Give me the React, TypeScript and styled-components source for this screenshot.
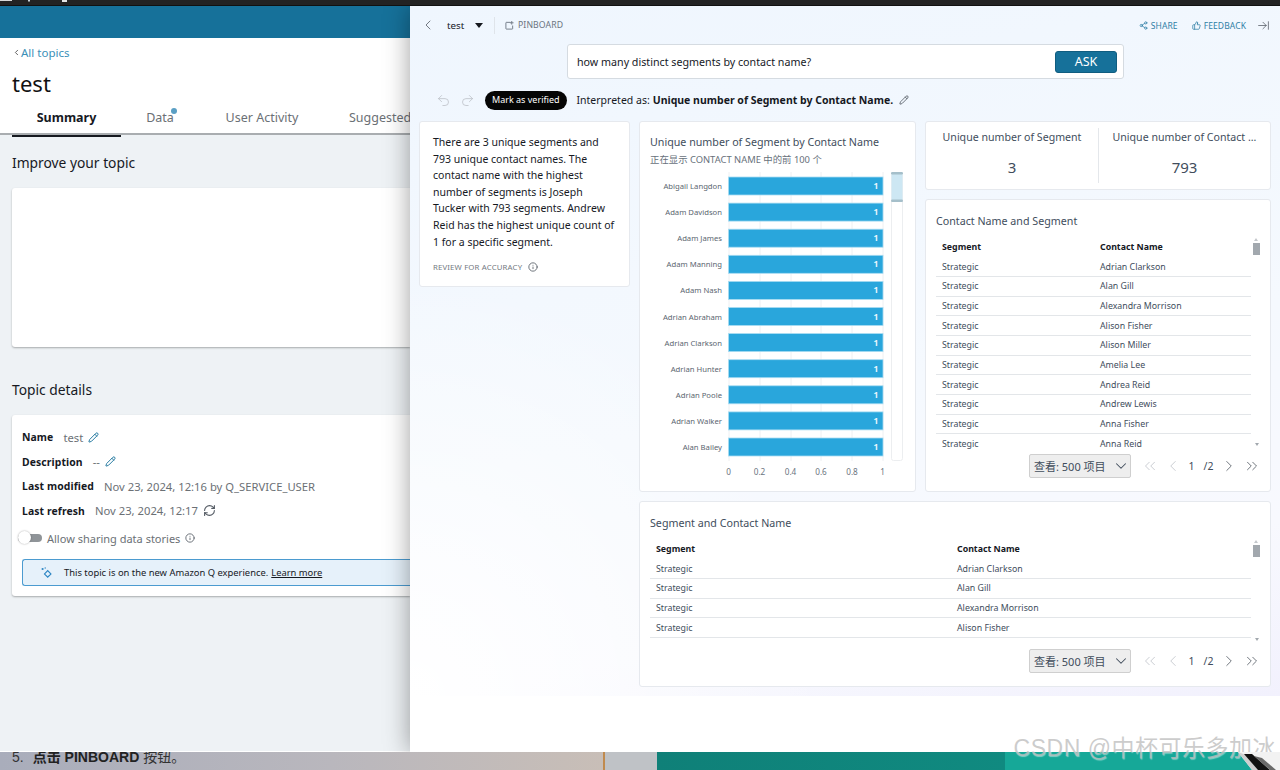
import React from "react";
import styled, { createGlobalStyle } from "styled-components";
import {
  ChevronLeft, ChevronDown, ChevronRight, ChevronsLeft, ChevronsRight, Share2, ThumbsUp,
  ArrowRightToLine, Pencil, RefreshCw, Info, Undo2, Redo2,
} from "lucide-react";

const Global = createGlobalStyle`
  html, body { margin: 0; padding: 0; background: #222; }
  body { font-family: "Noto Sans", "Noto Sans CJK SC", sans-serif; }
  * { box-sizing: border-box; }
`;

const Page = styled.div`
  width: 1280px; height: 770px; overflow: hidden; position: relative;
  display: flex; flex-direction: column;
`;
const TopStrip = styled.div`
  height: 6px; flex: none; background: #232323; position: relative; z-index: 2;
  border-bottom: 1px solid #111; display: flex; align-items: flex-start;
`;
const Main = styled.div`
  height: 746px; flex: none; display: flex; overflow: hidden;
`;

/* Left page */
const LeftPane = styled.div`
  width: 410px; flex: none; background: #eef2f5; display: flex; flex-direction: column;
  overflow: hidden; border-bottom: 1px solid #fff;
`;
const BlueBar = styled.div`height: 32px; flex: none; background: #16719a;`;
const LeftHead = styled.div`
  height: 97px; flex: none; background: #fff; padding: 0 0 0 12px; position: relative;
  border-bottom: 2px solid #a9adb0; display: flex; flex-direction: column;
`;
const Crumb = styled.div`
  margin-top: 7px; height: 14px; display: flex; align-items: center; font-size: 11.5px; color: #3a8fb7;
  svg { color: #333; margin-right: 0; margin-left: 0; }
`;
const PageTitle = styled.div`
  margin-top: 9px; font-size: 22px; line-height: 30px; color: #111; height: 30px;
`;
const Tabs = styled.div`display: flex; margin-top: 9px; height: 33px; white-space: nowrap;`;
const Tab = styled.div<{ $active?: boolean; $w: number }>`
  width: ${(p) => p.$w}px; flex: none; height: 30px; text-align: center; line-height: 22px; font-size: 12.5px;
  position: relative;
  font-weight: ${(p) => (p.$active ? 700 : 400)};
  color: ${(p) => (p.$active ? "#16191f" : "#6b7075")};
  border-bottom: ${(p) => (p.$active ? "2px solid #16191f" : "none")};
`;
const LastTab = styled(Tab)`text-align: left; padding-left: 24px;`;
const Dot = styled.span`
  position: absolute; left: 50px; top: 1px; width: 6px; height: 6px; border-radius: 50%; background: #5a9fc4;
`;
const SectionHead = styled.div<{ $top: number }>`
  margin: ${(p) => p.$top}px 0 0 12px; height: 20px; line-height: 20px; font-size: 13.8px; color: #16191f;
`;
const BlankCard = styled.div`
  margin: 15px 0 0 12px; height: 159px; background: #fff; border-radius: 3px 0 0 3px;
  box-shadow: 0 1px 2px rgba(0,0,0,.3);
`;
const DetailCard = styled.div`
  margin: 15px 0 0 12px; height: 181px; background: #fff; border-radius: 3px 0 0 3px;
  box-shadow: 0 1px 2px rgba(0,0,0,.3); padding: 10px 0 0 10px;
`;
const DetailRow = styled.div`
  height: 24.5px; display: flex; align-items: center; font-size: 11.25px; color: #6b7075; white-space: nowrap;
  b { color: #16191f; font-weight: 700; font-size: 10.4px; margin-right: 10px; letter-spacing: .1px; }
  svg { margin-left: 5px; }
`;
const ToggleRow = styled.div`
  margin-top: 3px; height: 24px; display: flex; align-items: center; font-size: 11px; color: #6b7075; gap: 5px; margin-left: -4px;
  svg { flex: none; }
`;
const Toggle = styled.span`
  width: 24px; height: 8px; background: #8f9498; border-radius: 4px; position: relative; flex: none;
  &::before {
    content: ""; position: absolute; left: 0; top: -3px; width: 13px; height: 13px; border-radius: 50%;
    background: #fff; box-shadow: 0 0 2px rgba(0,0,0,.35);
  }
`;
const Notice = styled.div`
  margin-top: 9px; height: 27px; background: #e6f1fa; border: 1px solid #4b9bd0; border-right: 0; border-radius: 3px 0 0 3px;
  display: flex; align-items: center; padding-left: 18px; font-size: 9.4px; color: #16191f; white-space: nowrap;
  span { margin-left: 12px; }
  u { color: #16191f; margin-left: 3px; }
`;

/* Drawer */
const Drawer = styled.div`
  width: 870px; flex: none; background: #fff; box-shadow: 0 0 24px rgba(0,0,0,.38); position: relative; z-index: 1;
  display: flex; flex-direction: column;
`;
const Tint = styled.div`
  height: 690px; flex: none; display: flex; flex-direction: column;
  background:
    radial-gradient(ellipse 420px 420px at 0% 100%, #fff 0%, rgba(255,255,255,0) 100%),
    linear-gradient(168deg, #eff6fe 0%, #f5f9fe 55%, #f8f9fe 80%, #f2f1fd 100%);
`;
const DrawerTop = styled.div`
  height: 38px; flex: none; display: flex; align-items: center; padding: 0 10px 0 10px; font-size: 8.7px; color: #6b7480;
`;
const TopicName = styled.span`margin-left: 11px; font-size: 9.8px; color: #16191f; width: 21px;`;
const Caret = styled.span`
  margin-left: 7px; width: 0; height: 0; border: 4.5px solid transparent; border-top: 5px solid #16191f; border-bottom: 0;
`;
const VSep = styled.span`width: 1px; height: 17px; background: #dfe4ea; margin: 0 10px 0 11px;`;
const TopLink = styled.span`
  display: flex; align-items: center; gap: 4px; letter-spacing: .1px;
`;
const Spacer = styled.span`flex: 1;`;
const ActionLink = styled(TopLink)<{ $mr: number }>`color: #2f7fa6; margin-right: ${(p) => p.$mr}px; gap: 3px; font-size: 8.5px;`;
const AskRow = styled.div`display: flex; justify-content: center; padding-right: 2px; flex: none; padding-left: 2px;`;
const AskBox = styled.div`
  margin-left: 1px; width: 557px; height: 35px; background: #fff; border: 1px solid #d5dbe1; border-radius: 3px;
  display: flex; align-items: center; padding: 0 6px 0 9px; font-size: 10.7px; color: #16191f;
  span { flex: 1; }
`;
const AskButton = styled.div`
  width: 62px; height: 22px; background: #16719a; border: 1px solid #105d80; border-radius: 3px; color: #fff;
  font-size: 12.5px; text-align: center; line-height: 20px;
`;
const InterpRow = styled.div`
  height: 42px; flex: none; display: flex; align-items: center; padding-left: 26px; font-size: 10.5px; color: #16191f; white-space: nowrap;
  b { font-weight: 700; margin-left: 3px; }
`;
const Verified = styled.span`
  margin: 0 10px 0 10px; height: 19px; padding: 0 7px; background: #050505; color: #fff; border-radius: 10px;
  font-size: 9px; line-height: 18px;
`;
const Boards = styled.div`
  margin-left: 9px; display: grid; grid-template-columns: 211px 277px 346px; column-gap: 9px; row-gap: 9px;
  grid-template-rows: 371px 186px;
`;
const Card = styled.div`
  background: #fff; border: 1px solid #e6e9ee; border-radius: 3px; min-width: 0; min-height: 0;
`;
const SummaryCard = styled(Card)`
  height: 166px; padding: 12px 12px 0 13px; font-size: 10.5px; line-height: 16.6px; color: #16191f;
`;
const ReviewLine = styled.div`
  margin-top: 9px; display: flex; align-items: center; gap: 6px; font-size: 7.8px; color: #737a82; letter-spacing: .15px;
`;
const RightStack = styled.div`display: flex; flex-direction: column; gap: 9px; min-height: 0;`;
const ChartCard = styled(Card)`padding: 13px 0 0 10px; display: flex; flex-direction: column;`;
const CardTitle = styled.div`font-size: 10.7px; line-height: 15px; color: #414d5c; white-space: nowrap;`;
const CardSub = styled.div`font-size: 9.4px; line-height: 14px; margin-top: 3px; color: #68717b; white-space: nowrap;`;
const KpiCard = styled(Card)`height: 69px; flex: none; display: grid; grid-template-columns: 173px 1fr; padding: 6px 0;`;
const Kpi = styled.div<{ $rule?: boolean }>`
  text-align: center; color: #414d5c; border-right: ${(p) => (p.$rule ? "1px solid #e4e7eb" : "0")};
  padding: 2px 0 0 0; white-space: nowrap;
`;
const KpiLabel = styled.div`font-size: 10.6px; line-height: 15px;`;
const KpiValue = styled.div`font-size: 15px; line-height: 20px; margin-top: 12px;`;
const TableCard = styled(Card)`flex: 1; padding: 14px 0 0 10px; position: relative; display: flex; flex-direction: column; min-height: 0;`;
const BottomCard = styled(TableCard)`grid-column: 2 / span 2;`;
const TableScroll = styled.div<{ $h: number; $w: number }>`
  margin-top: 8.5px; height: ${(p) => p.$h}px; width: ${(p) => p.$w}px; overflow: hidden; font-size: 8.8px; color: #414d5c; flex: none;
`;
const Row = styled.div<{ $cols: string; $head?: boolean }>`
  height: 19.7px; display: grid; grid-template-columns: ${(p) => p.$cols}; align-items: center; padding-left: 6px;
  font-weight: ${(p) => (p.$head ? 700 : 400)};
  color: ${(p) => (p.$head ? "#16191f" : "#414d5c")};
  border-bottom: ${(p) => (p.$head ? "0" : "1px solid #e3e6e9")};
`;
const Thumb = styled.div`
  position: absolute; right: 10px; top: 43px; width: 7px; height: 12px; background: #a2a8ae;
  &::before { content: ""; position: absolute; left: 1px; top: -5px; border: 2.5px solid transparent; border-bottom: 3px solid #c4c8cc; border-top: 0; }
`;
const ScrollDown = styled.div<{ $top: number }>`
  position: absolute; right: 11px; top: ${(p) => p.$top}px; width: 0; height: 0; border: 2.5px solid transparent; border-top: 3px solid #a2a8ae; border-bottom: 0;
`;
const Pager = styled.div<{ $pl: number; $gap: number }>`
  margin-top: ${(p) => p.$gap}px; display: flex; align-items: center; height: 24px; padding-left: ${(p) => p.$pl}px; color: #414d5c; font-size: 10.5px; flex: none;
`;
const Select = styled.div`
  width: 102px; height: 24px; background: #eeeeee; border: 1px solid #cfcfcf; border-radius: 2px; display: flex; align-items: center;
  padding-left: 4px; font-size: 11px; color: #414d5c; gap: 6px; white-space: nowrap; margin-right: 8px;
`;
const PageBtn = styled.span<{ $off?: boolean }>`
  width: 22.5px; display: flex; justify-content: center; color: ${(p) => (p.$off ? "#c0c4c9" : "#545b64")};
`;
const PageNum = styled.span`width: 15px; text-align: center;`;
const PageOf = styled.span`width: 19px; text-align: center;`;

/* Bottom strip */
const BottomStrip = styled.div`
  height: 18px; flex: none; display: flex; position: relative; z-index: 2; overflow: hidden;
  background: #b4b6c0;
`;
const DocPart = styled.div`
  width: 605px; flex: none; background: linear-gradient(90deg, #a9adbb, #b9b7bd 55%, #c8beb7);
  border-right: 2px solid #c08a4e; font-family: "Liberation Sans", "Noto Sans CJK SC", sans-serif; font-size: 14px; color: #333; padding-left: 12px;
  line-height: 10px; white-space: nowrap;
  b { color: #222; margin-left: 9px; }
`;
const GreyPart = styled.div`width: 52px; flex: none; background: #bfc2c6;`;
const DarkTeal = styled.div`width: 348px; flex: none; background: linear-gradient(90deg, #0f8078, #108a80);`;
const Teal = styled.div`flex: 1; background: #16a898;`;
const Watermark = styled.div`
  position: absolute; right: 4px; top: 736px; z-index: 3; font-size: 23px; line-height: 24px; letter-spacing: .5px; color: rgba(190,190,190,.78);
  text-shadow: 1px 1px 1px rgba(255,255,255,.45); white-space: nowrap; font-family: "Liberation Sans", "Noto Sans CJK SC", sans-serif;
`;
const CursorMark = styled.svg`position: absolute; right: 0; top: 752px; z-index: 3;`;
const TopBits = styled.svg`flex: none;`;

const names = [
  "Abigail Langdon", "Adam Davidson", "Adam James", "Adam Manning", "Adam Nash", "Adrian Abraham",
  "Adrian Clarkson", "Adrian Hunter", "Adrian Poole", "Adrian Walker", "Alan Bailey",
];
const BarChart = () => (
  <svg width="266" height="314" viewBox="639 168 266 314" style={{ marginLeft: -11, marginTop: 1, flex: "none" }} fontFamily="Noto Sans, sans-serif">
    {[729, 760, 791, 821, 852, 883].map((x) => (
      <line key={x} x1={x} x2={x} y1={172} y2={461} stroke="#eef0f2" />
    ))}
    {names.map((n, i) => {
      const y = 186 + i * 26.1;
      return (
        <g key={n}>
          <text x={722} y={y + 3} textAnchor="end" fontSize={7.7} fill="#5b6670">{n}</text>
          <rect x={728.5} y={y - 9} width={154.5} height={18} fill="#29a6dc" stroke="#a8dcf2" strokeWidth={0.8} />
          <text x={876} y={y + 3} textAnchor="middle" fontSize={8.5} fontWeight={700} fill="#e8f6fd">1</text>
        </g>
      );
    })}
    {["0", "0.2", "0.4", "0.6", "0.8", "1"].map((t, i) => (
      <text key={t} x={[728.5, 759.5, 790.5, 821, 852, 882.5][i]} y={474.5} textAnchor="middle" fontSize={8.2} fill="#6b7480">{t}</text>
    ))}
    <rect x={891.5} y={172.5} width={11} height={288} rx={2} fill="#fff" stroke="#eceef0" />
    <rect x={891.5} y={173} width={11} height={27} fill="#cde7f3" />
    <rect x={891} y={172} width={12} height={2.5} rx={1.25} fill="#a5bfca" />
    <rect x={891} y={199.5} width={12} height={2.5} rx={1.25} fill="#a5bfca" />
  </svg>
);

const tableNames = [
  "Adrian Clarkson", "Alan Gill", "Alexandra Morrison", "Alison Fisher", "Alison Miller",
  "Amelia Lee", "Andrea Reid", "Andrew Lewis", "Anna Fisher", "Anna Reid",
];

const DataTable = ({ cols, h, w, rows }: { cols: string; h: number; w: number; rows: number }) => (
  <TableScroll $h={h} $w={w}>
    <Row $cols={cols} $head>
      <span>Segment</span>
      <span>Contact Name</span>
    </Row>
    {tableNames.slice(0, rows).map((n) => (
      <Row $cols={cols} key={n}>
        <span>Strategic</span>
        <span>{n}</span>
      </Row>
    ))}
  </TableScroll>
);

const PagerBar = ({ pl, gap }: { pl: number; gap: number }) => (
  <Pager $pl={pl} $gap={gap}>
    <Select>
      查看: 500 项目 <ChevronDown size={18} strokeWidth={1.4} />
    </Select>
    <PageBtn $off><ChevronsLeft size={18} strokeWidth={1.1} /></PageBtn>
    <PageBtn $off><ChevronLeft size={18} strokeWidth={1.1} /></PageBtn>
    <PageNum>1</PageNum>
    <PageOf>/2</PageOf>
    <PageBtn><ChevronRight size={18} strokeWidth={1.1} /></PageBtn>
    <PageBtn><ChevronsRight size={18} strokeWidth={1.1} /></PageBtn>
  </Pager>
);

const PinIcon = () => (
  <svg width="9" height="9" viewBox="0 0 10 10" fill="none" stroke="#6b7480" strokeWidth="1">
    <path d="M6 1.5H1.5a.5.5 0 0 0-.5.5v6.5a.5.5 0 0 0 .5.5h6.5a.5.5 0 0 0 .5-.5V5" />
    <path d="M7.5 0v4M5.5 2h4" />
  </svg>
);
const SparkIcon = () => (
  <svg width="11" height="12" viewBox="0 0 11 12" fill="none" stroke="#2f87c4" strokeWidth="1.1">
    <rect x="4.4" y="4.6" width="4.6" height="4.6" transform="rotate(45 6.7 6.9)" />
    <circle cx="1.6" cy="2" r="1.1" fill="#2f87c4" stroke="none" />
    <circle cx="4.2" cy="1" r=".7" fill="#2f87c4" stroke="none" />
  </svg>
);

export default function App() {
  return (
    <Page>
      <Global />
      <TopStrip>
        <TopBits width="70" height="3" viewBox="0 0 70 3">
          <rect x="0" y="0" width="12" height="1" fill="#d8d8d8" />
          <rect x="28" y="0" width="2" height="1.5" fill="#c8d4dc" />
          <rect x="62" y="0" width="5" height="2" fill="#e6e6e6" />
        </TopBits>
      </TopStrip>
      <Main>
        <LeftPane>
          <BlueBar />
          <LeftHead>
            <Crumb><ChevronLeft size={9} strokeWidth={2} />All topics</Crumb>
            <PageTitle>test</PageTitle>
            <Tabs>
              <Tab $active $w={109}>Summary</Tab>
              <Tab $w={78}>Data<Dot /></Tab>
              <Tab $w={126}>User Activity</Tab>
              <LastTab $w={86}>Suggested</LastTab>
            </Tabs>
          </LeftHead>
          <SectionHead $top={18}>Improve your topic</SectionHead>
          <BlankCard />
          <SectionHead $top={33}>Topic details</SectionHead>
          <DetailCard>
            <DetailRow><b>Name</b>test<Pencil size={11} color="#16719a" /></DetailRow>
            <DetailRow><b>Description</b>--<Pencil size={11} color="#16719a" /></DetailRow>
            <DetailRow><b>Last modified</b>Nov 23, 2024, 12:16 by Q_SERVICE_USER</DetailRow>
            <DetailRow><b>Last refresh</b>Nov 23, 2024, 12:17<RefreshCw size={13} color="#545b64" /></DetailRow>
            <ToggleRow><Toggle />Allow sharing data stories<Info size={10} color="#545b64" /></ToggleRow>
            <Notice><SparkIcon /><span>This topic is on the new Amazon Q experience.</span><u>Learn more</u></Notice>
          </DetailCard>
        </LeftPane>
        <Drawer>
          <Tint>
            <DrawerTop>
              <ChevronLeft size={16} strokeWidth={1.2} color="#545b64" />
              <TopicName>test</TopicName>
              <Caret />
              <VSep />
              <TopLink><PinIcon />PINBOARD</TopLink>
              <Spacer />
              <ActionLink $mr={14}><Share2 size={9} />SHARE</ActionLink>
              <ActionLink $mr={11}><ThumbsUp size={9} />FEEDBACK</ActionLink>
              <ArrowRightToLine size={13} strokeWidth={1.4} color="#545b64" />
            </DrawerTop>
            <AskRow>
              <AskBox><span>how many distinct segments by contact name?</span><AskButton>ASK</AskButton></AskBox>
            </AskRow>
            <InterpRow>
              <Undo2 size={15} strokeWidth={1.2} color="#b9bec4" />
              <Redo2 size={15} strokeWidth={1.2} color="#b9bec4" style={{ marginLeft: 9 }} />
              <Verified>Mark as verified</Verified>
              Interpreted as:<b>Unique number of Segment by Contact Name.</b>
              <Pencil size={10} color="#545b64" style={{ marginLeft: 6 }} />
            </InterpRow>
            <Boards>
              <SummaryCard>
                There are 3 unique segments and 793 unique contact names. The contact name with the highest number of segments is Joseph Tucker with 793 segments. Andrew Reid has the highest unique count of 1 for a specific segment.
                <ReviewLine>REVIEW FOR ACCURACY <Info size={10} color="#545b64" /></ReviewLine>
              </SummaryCard>
              <ChartCard>
                <CardTitle>Unique number of Segment by Contact Name</CardTitle>
                <CardSub>正在显示 CONTACT NAME 中的前 100 个</CardSub>
                <BarChart />
              </ChartCard>
              <RightStack>
                <KpiCard>
                  <Kpi $rule>
                    <KpiLabel>Unique number of Segment</KpiLabel>
                    <KpiValue>3</KpiValue>
                  </Kpi>
                  <Kpi>
                    <KpiLabel>Unique number of Contact ...</KpiLabel>
                    <KpiValue>793</KpiValue>
                  </Kpi>
                </KpiCard>
                <TableCard>
                  <CardTitle>Contact Name and Segment</CardTitle>
                  <DataTable cols="158px 1fr" h={212.5} w={315} rows={10} />
                  <Thumb />
                  <ScrollDown $top={243} />
                  <PagerBar pl={93} gap={4} />
                </TableCard>
              </RightStack>
              <BottomCard>
                <CardTitle>Segment and Contact Name</CardTitle>
                <DataTable cols="301px 1fr" h={103} w={601} rows={5} />
                <Thumb />
                <ScrollDown $top={136} />
                <PagerBar pl={379} gap={6.5} />
              </BottomCard>
            </Boards>
          </Tint>
        </Drawer>
      </Main>
      <BottomStrip>
        <DocPart>5.<b>点击 PINBOARD</b> 按钮。</DocPart>
        <GreyPart />
        <DarkTeal />
        <Teal />
      </BottomStrip>
      <Watermark>CSDN @中杯可乐多加冰</Watermark>
      <CursorMark width="42" height="18" viewBox="0 0 42 18">
        <path d="M0 0L14 18H42V0H30z" fill="#f2f2f2" />
        <path d="M0 0L14 18H24L10 4z" fill="#cfcfcf" />
        <path d="M6 2L20 18H32L14 2z" fill="#111" />
        <path d="M16 4L32 18H38L24 6z" fill="#6a6a6a" />
      </CursorMark>
    </Page>
  );
}
